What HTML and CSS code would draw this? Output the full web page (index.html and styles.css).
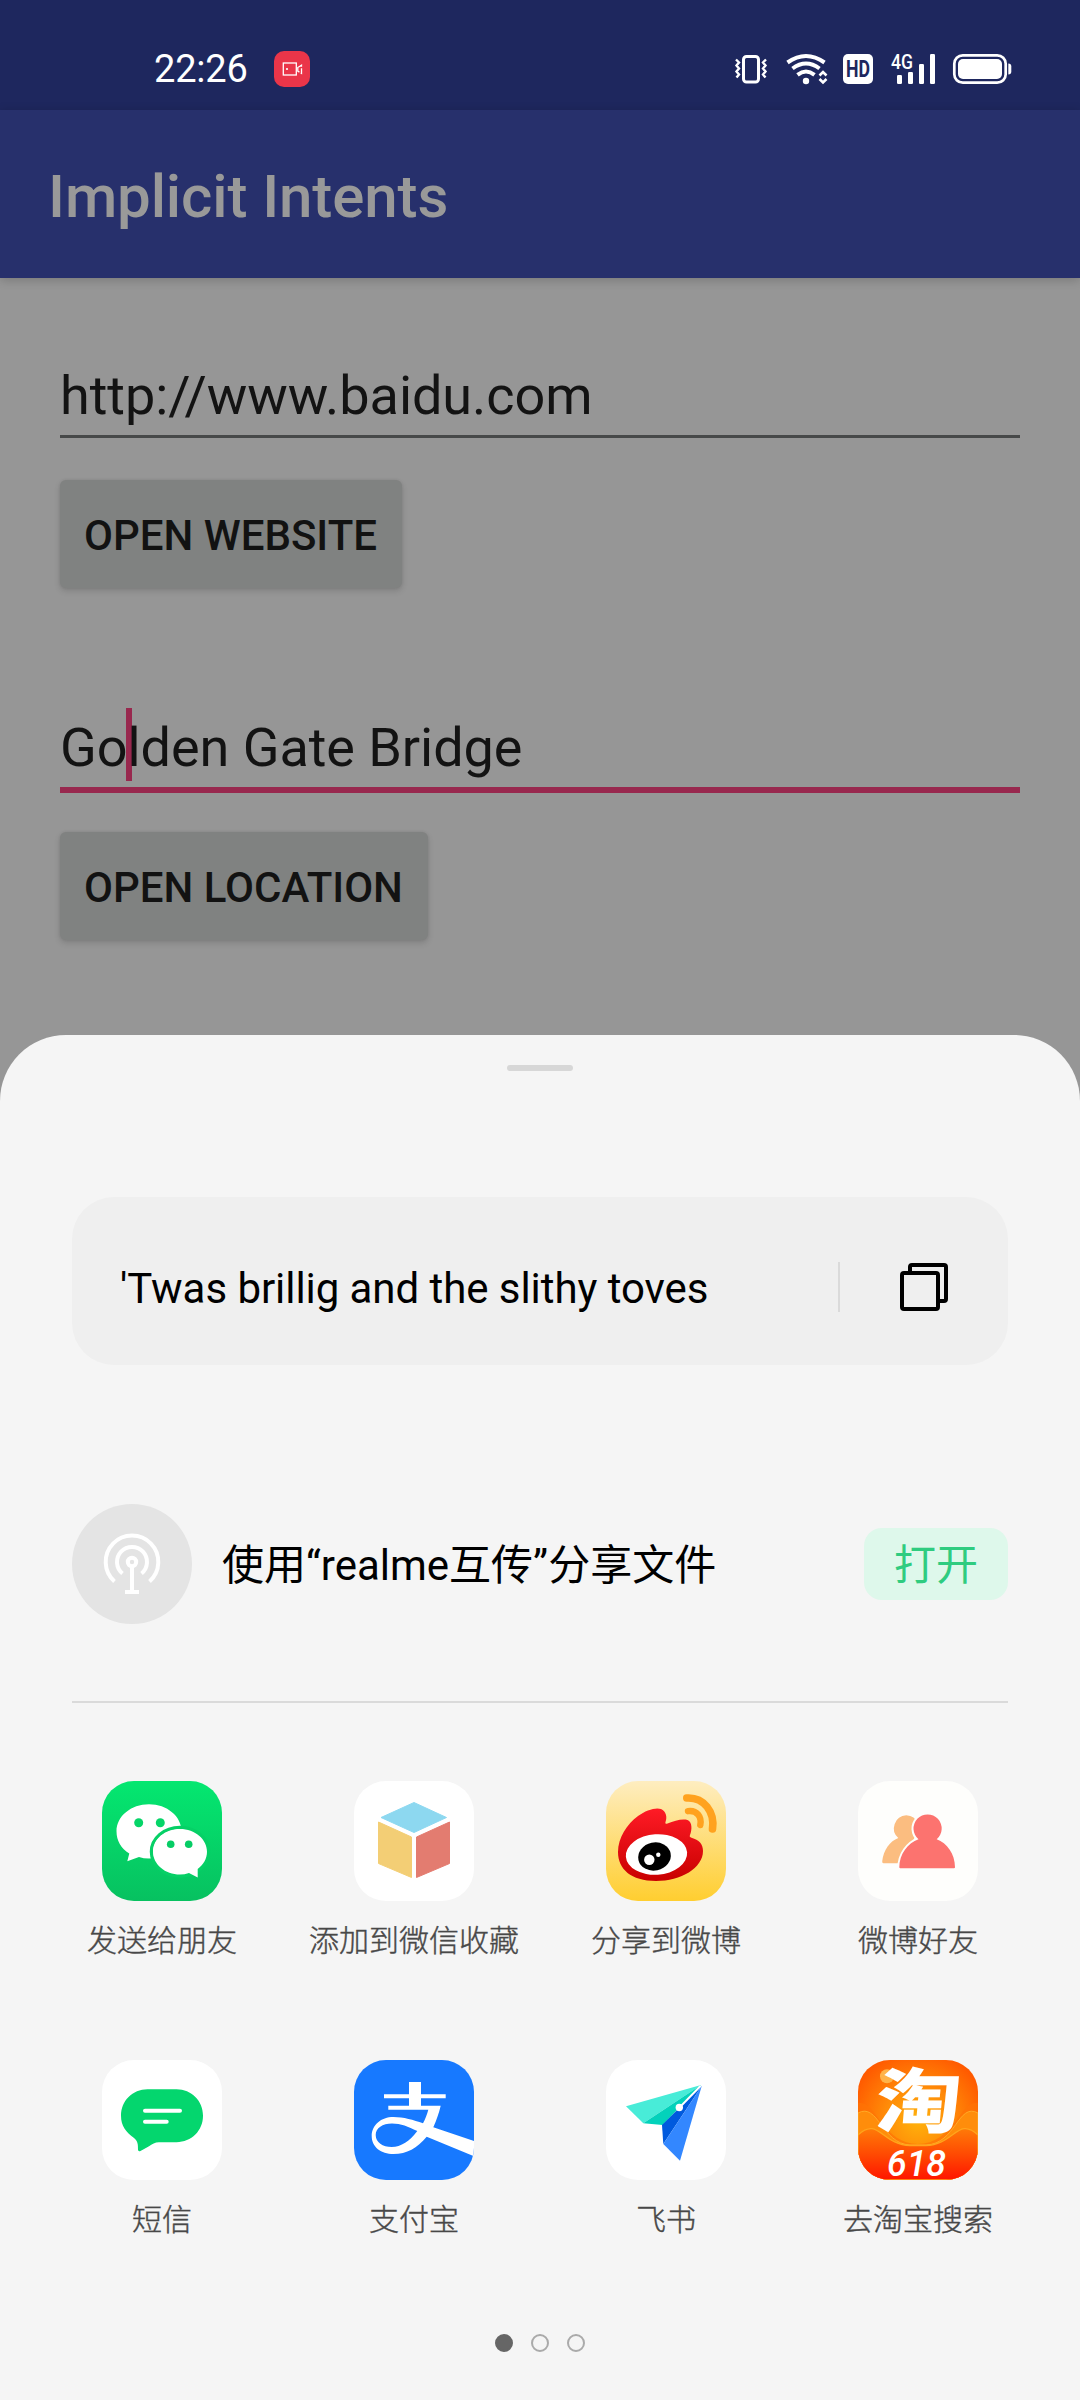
FILE: index.html
```html
<!DOCTYPE html>
<html lang="zh-CN">
<head>
<meta charset="utf-8">
<title>Implicit Intents</title>
<link rel="stylesheet" href="styles.css">
</head>
<body>
<header class="status">
  <span class="clock">22:26</span>
  <svg class="rec" width="36" height="36" viewBox="0 0 36 36">
    <rect width="36" height="36" rx="10" fill="#ea3549"/>
    <g fill="none" stroke="#fff" stroke-width="1.3"><rect x="9.3" y="12" width="13" height="12"/><path d="M23.8 16.5l3.7-2.3v8.200l-3.700-2.300z" stroke-dasharray="6 1.500"/></g>
    <circle cx="13" cy="18" r="1.100" fill="#fff"/>
  </svg>
  <svg class="sysicons" width="276" height="30" viewBox="0 0 276 30" fill="none" stroke="#fff">
    <rect x="8.500" y="2.500" width="15" height="25.500" rx="3" stroke-width="3"/>
    <path d="M1 5.500l3 3-2.500 3 2.500 3-2.500 3 2.500 3-2.500 3M31 5.500l-3 3 2.500 3-2.500 3 2.500 3-2.500 3 2.500 3" stroke-width="2.400"/>
    <path d="M52.500 8.500q18.500-13 37 0M57.500 14.500q13.500-10 27 0M62.500 20.800q8.500-6.500 17 0" stroke-width="4"/>
    <circle cx="71" cy="27" r="3.200" fill="#fff" stroke="none"/>
    <path d="M84.500 21.500l3.500-3.500 3.500 3.500M84.500 25l3.500 3.500 3.500-3.500" stroke-width="2.600"/>
    <rect x="108" y="0" width="30" height="30" rx="5" fill="#fff" stroke="none"/>
    <text class="hd" x="111" y="22.800" textLength="24" lengthAdjust="spacingAndGlyphs">HD</text>
    <text class="g4" x="156" y="15" textLength="22" lengthAdjust="spacingAndGlyphs">4G</text>
    <g fill="#fff" stroke="none"><rect x="162" y="21" width="5" height="9" rx="1.200"/><rect x="173" y="18" width="5" height="12" rx="1.200"/><rect x="184" y="10" width="5" height="20" rx="1.200"/><rect x="195" y="0" width="5" height="30" rx="1.200"/>
    <rect x="223" y="5" width="44" height="20" rx="5"/><path d="M273.300 9.500q3 0 3 3v5q0 3-3 3z"/></g>
    <rect x="219.300" y="1.300" width="51.400" height="27.400" rx="8.500" stroke-width="2.700"/>
  </svg>
</header>
<div class="appbar"><h1>Implicit Intents</h1></div>

<main class="form">
  <div class="field">http://www.baidu.com</div>
  <button class="btn">OPEN WEBSITE</button>
  <div class="field focused">Go<i class="caret"></i>lden Gate Bridge</div>
  <button class="btn">OPEN LOCATION</button>
</main>

<section class="sheet">
  <div class="handle"></div>
  <div class="preview">
    <p><span>'Twas brillig and the slithy toves</span></p>
    <svg class="copy" width="48" height="48" viewBox="0 0 48 48" fill="none" stroke="#000" stroke-width="4"><rect x="2" y="10" width="36" height="36" rx="2"/><path d="M10 10V4q0-2 2-2h32q2 0 2 2v32q0 2-2 2h-6"/></svg>
  </div>
  <div class="nearby">
    <svg width="120" height="120" viewBox="0 0 120 120" fill="none" stroke="#fff" stroke-width="4">
      <circle cx="60" cy="60" r="60" fill="#e4e4e4" stroke="none"/>
      <circle cx="60" cy="58" r="4.200"/>
      <path d="M60 62v26M53 88h14M50.500 69.500a15 15 0 1 1 19 0M42.500 77.500a26.300 26.300 0 1 1 35 0"/>
    </svg>
    <p>使用“realme互传”分享文件</p>
    <button class="open">打开</button>
  </div>
  <div class="apps">
    <div class="app">
      <svg viewBox="0 0 120 120"><defs><linearGradient id="wx" x2="0" y2="1"><stop stop-color="#04e770"/><stop offset="1" stop-color="#07c160"/></linearGradient></defs>
        <rect width="120" height="120" fill="url(#wx)"/>
        <path fill="#fff" d="M47 23.300c18 0 32.500 12 32.500 27S65 77.500 47 77.500q-5.500 0-10-1.500L25.300 80.200l2-7.700C19 67.500 14.500 59.500 14.500 50.300c0-15 14.500-27 32.500-27z"/>
        <circle cx="36.700" cy="41.700" r="4.500" fill="#05d568"/><circle cx="58.300" cy="41.700" r="4.500" fill="#05d568"/>
        <ellipse cx="78" cy="70.700" rx="28.500" ry="24.300" fill="none" stroke="#06d066" stroke-width="3.500"/>
        <path fill="#fff" d="M78 48c15 0 27 10.200 27 22.700 0 7-3.700 13-9.300 17.300V96.500L87 92q-4.500 1.500-9 1.500c-15 0-27-10.200-27-22.800S63 48 78 48z"/>
        <circle cx="68.700" cy="63.300" r="3.800" fill="#06cd65"/><circle cx="86.700" cy="63.300" r="3.800" fill="#06cd65"/></svg>
      <span>发送给朋友</span>
    </div>
    <div class="app">
      <svg viewBox="0 0 120 120"><rect width="120" height="120" fill="#fff"/>
        <g stroke-width="1" stroke-linejoin="round"><path d="M60 21.500l32.500 15L60 51.500l-33-15z" fill="#8dd8f0" stroke="#8dd8f0"/><path d="M24.500 41L57.500 56v40.500l-33-14z" fill="#f3ce75" stroke="#f3ce75"/><path d="M62.500 56l33-15v41.500l-33 14z" fill="#e37c70" stroke="#e37c70"/></g></svg>
      <span>添加到微信收藏</span>
    </div>
    <div class="app">
      <svg viewBox="0 0 120 120"><defs><linearGradient id="wb" x2="0" y2="1"><stop stop-color="#feedc0"/><stop offset="1" stop-color="#ffce30"/></linearGradient><linearGradient id="wr" x2="0" y2="1"><stop stop-color="#ff1b26"/><stop offset="1" stop-color="#c80000"/></linearGradient></defs>
        <rect width="120" height="120" fill="url(#wb)"/>
        <path fill="url(#wr)" d="M12 71C12 57 21 43 32 35c8-6 18-9 23-7s6.500 8 4.500 13q-1 2.500 2 1.500c7-3 15-5 20-3.500 5 2 4.500 10 2.500 15q-1 2 1.500 2.800C93 59 97 63 97 70c0 17-22 30-47 30S12 88 12 71z"/>
        <ellipse cx="50.500" cy="73.500" rx="30.700" ry="20.300" fill="#fff" transform="rotate(-4 50.500 73.500)"/>
        <ellipse cx="48.500" cy="75.500" rx="16.400" ry="14" transform="rotate(-12 48.500 75.500)"/>
        <circle cx="43.300" cy="78.700" r="5.200" fill="#fff"/><circle cx="52.300" cy="73.700" r="2.200" fill="#fff"/>
        <g fill="none" stroke="#ffa21f" stroke-linecap="round"><path d="M80.800 17C98 16 109 31 106.500 48" stroke-width="7.600"/><path d="M82 30.200C91 29 96 36 94.300 44" stroke-width="6.400"/></g></svg>
      <span>分享到微博</span>
    </div>
    <div class="app">
      <svg viewBox="0 0 120 120"><rect width="120" height="120" fill="#fefefc"/>
        <path fill="#fbbd80" d="M48.300 34.300a12.800 13 0 0 1 8 22.700L50 75l-9 7.300H25.500q-1.500 0-1.300-2C25.500 69 32 60 40.300 57a13 13 0 0 1 8-22.700z"/>
        <path d="M60.500 58.300a14.100 14.100 0 1 1 18.200 0C89 62 97 73 97 87.300H41.300C41.300 73 50 62 60.500 58.300z" fill="none" stroke="#fefefc" stroke-width="4"/>
        <path fill="#fc736f" d="M60.500 58.300a14.100 14.100 0 1 1 18.200 0C89 62 97 73 97 86.300q0 1-1 1H42.300q-1 0-1-1C41.300 73 50 62 60.500 58.300z"/></svg>
      <span>微博好友</span>
    </div>
    <div class="app">
      <svg viewBox="0 0 120 120"><rect width="120" height="120" fill="#fff"/>
        <path fill="#04d66e" d="M45.500 29.300h29c15 0 26.500 11.700 26.500 26.500S89.500 82.200 74.500 82.200H57c-4 0-7 2-10 4l-8.500 4.800q-2.500 1-2.500-1.500c0-5 0-8-4-11.500-8-6-13-12-13-22.200 0-14.800 11.500-26.500 26.500-26.500z"/>
        <path d="M43 50.700h35M43 61.800h21.700" stroke="#fff" stroke-width="4" stroke-linecap="round"/></svg>
      <span>短信</span>
    </div>
    <div class="app">
      <svg viewBox="0 0 120 120"><rect width="120" height="120" fill="#1779ff"/>
        <path fill="#fff" fill-rule="evenodd" d="M55 22h12v12.300h24.700v4H67v7.400h19.700C85 53 82.500 60 79.300 67.300L120 81v15.300L72.700 76.700C63 88 53 94 39.500 94 27 94 17.700 87 17.700 76S27 57 39.500 57c10 0 20 3 29.500 6.300 2.500-4.500 4-9 5.300-13.600h-40v-4H55v-7.400H30v-4h25zM63.300 71C54 66.500 47 63.500 38 63.500c-9.500 0-16.300 4.500-16.300 11.500 0 7.500 7 12 16 12C47 87 56 81 63.300 71z"/></svg>
      <span>支付宝</span>
    </div>
    <div class="app">
      <svg viewBox="0 0 120 120"><rect width="120" height="120" fill="#fff"/>
        <path fill="#48ecd8" d="M20 46.300L95 25 37.300 63.300z"/><path fill="#03d2bb" d="M37.300 63.300L95 25 56.700 65z"/><path fill="#005ade" d="M56 65L95.700 26 57.300 84z"/><path fill="#3387ff" d="M57.300 84L95.700 26 74 100.700z"/>
        <path d="M73.500 47.500L94.500 26" stroke="#fff" stroke-width="1.800"/><circle cx="73.300" cy="47.500" r="3.700" fill="#fff"/></svg>
      <span>飞书</span>
    </div>
    <div class="app">
      <svg class="taobao" viewBox="0 0 120 120"><defs><radialGradient id="tg" cx=".5" cy=".5" r=".58"><stop stop-color="#ffb30c"/><stop offset=".5" stop-color="#ff8a08"/><stop offset="1" stop-color="#ff5a00"/></radialGradient><linearGradient id="tr" x2="0" y2="1"><stop stop-color="#ff7a08"/><stop offset=".5" stop-color="#ff4a02"/><stop offset="1" stop-color="#ff1500"/></linearGradient><clipPath id="tc"><rect width="120" height="120" rx="32"/></clipPath></defs>
        <g clip-path="url(#tc)">
        <rect width="120" height="120" fill="url(#tg)"/>
        <path d="M0 43C18 40 24 84 60 84S102 40 120 43V120H0z" fill="#ff7406" opacity=".7"/>
        <path d="M0 53C20 42 24 84 52 85H68C98 84 100 42 120 53V120H0z" fill="#ff8d0b" stroke="#ffab27"/>
        <path d="M0 75C20 56 24 85 52 85.500H68C96 85 100 56 120 75V120H0z" fill="url(#tr)" stroke="#ffa51c" stroke-width="1.300"/>
        <circle cx="29" cy="16.300" r="7" fill="#ffb348"/>
        </g>
        <g transform="translate(16 67) skewX(-5) scale(1.180 .98)"><text class="tao" x="0" y="0">淘</text></g>
        <text class="sale" x="29" y="115.500" textLength="59" lengthAdjust="spacingAndGlyphs">618</text></svg>
      <span>去淘宝搜索</span>
    </div>
  </div>
  <div class="pager"><i class="on"></i><i></i><i></i></div>
</section>
</body>
</html>
```
FILE: styles.css
```css
* { box-sizing: border-box; }
body {
  margin: 0;
  width: 1080px;
  height: 2400px;
  display: flex;
  flex-direction: column;
  background: #969696;
  font-family: Roboto, "Noto Sans CJK SC", sans-serif;
  overflow: hidden;
}
h1, p { margin: 0; font-weight: 400; }
button { border: 0; font-family: inherit; }
svg { display: block; flex: none; }

.status {
  height: 110px;
  flex: none;
  display: flex;
  align-items: flex-start;
  padding: 51px 69px 0 154px;
  background: #1e275e;
  color: #fff;
}
.clock { width: 120px; font-size: 38px; line-height: 36px; letter-spacing: -.2px; }
.sysicons { margin: 3px 0 0 auto; overflow: visible; }
.hd { font: 700 23px Roboto, sans-serif; fill: #1e275e; stroke: none; }
.g4 { font: 500 20px Roboto, sans-serif; fill: #fff; stroke: none; }

.appbar {
  height: 168px;
  flex: none;
  display: flex;
  align-items: center;
  padding: 5px 0 0 48px;
  background: #27306c;
  box-shadow: 0 2px 10px rgba(0, 0, 0, .2);
}
.appbar h1 { font-size: 60px; font-weight: 500; line-height: 70px; letter-spacing: -.1px; color: #999; }

.form {
  height: 757px;
  flex: none;
  display: flex;
  flex-direction: column;
  align-items: flex-start;
  padding: 82px 60px 0;
}
.field {
  width: 960px;
  height: 78px;
  border-bottom: 3px solid #474949;
  font-size: 54px;
  line-height: 72px;
  letter-spacing: -.05px;
  color: #131313;
}
.field.focused { height: 87px; margin-top: 118px; border-bottom: 6px solid #98284e; line-height: 83px; }
.caret { display: inline-block; width: 6px; height: 73px; margin: 0 -5px 0 -1px; vertical-align: -15px; background: #98284e; }
.btn {
  height: 108px;
  margin-top: 42px;
  padding: 2px 25px 0 24px;
  border-radius: 6px;
  background: #808281;
  box-shadow: 0 3px 6px rgba(0, 0, 0, .14), 0 0 3px rgba(0, 0, 0, .08);
  font-size: 42px;
  font-weight: 500;
  color: #121212;
}
.focused + .btn { margin-top: 39px; }

.sheet {
  flex: 1;
  display: flex;
  flex-direction: column;
  padding: 30px 72px 0;
  border-radius: 66px 66px 0 0;
  background: #f5f5f5;
}
.handle { width: 66px; height: 6px; border-radius: 3px; align-self: center; background: #d7d7d7; }
.preview {
  height: 168px;
  margin-top: 126px;
  display: flex;
  align-items: center;
  padding: 12px 60px 0 48px;
  border-radius: 42px;
  background: #efefef;
}
.preview p { flex: 1; height: 50px; font-size: 42px; line-height: 54px; letter-spacing: -.06px; color: #000; border-right: 2px solid #dadada; margin-right: 60px; }
.copy { margin-top: -1px; }
.nearby {
  height: 200px;
  margin-top: 138px;
  flex: none;
  display: flex;
  padding-top: 1px;
  border-bottom: 2px solid #dadada;
}
.nearby p { flex: 1; padding-left: 30px; font-size: 42px; line-height: 124px; color: #000; }
.open {
  width: 144px;
  height: 72px;
  margin-top: 24px;
  padding: 3px 0 0;
  border-radius: 18px;
  background: #def8eb;
  font-size: 42px;
  line-height: 69px;
  color: #2fcc80;
}
.apps {
  display: grid;
  grid-template-columns: repeat(4, 252px);
  grid-auto-rows: 279px;
  margin: 78px -36px 0;
}
.app { display: flex; flex-direction: column; align-items: center; }
.app svg { width: 120px; height: 120px; border-radius: 32px; }
.app .taobao { overflow: visible; border-radius: 0; }
.app span { margin-top: 18px; font-size: 30px; font-weight: 300; line-height: 44px; color: #484848; -webkit-text-stroke: .4px #484848; white-space: nowrap; }
.tao { font: 900 72px "Noto Sans CJK SC", sans-serif; fill: #fff; }
.sale { font: italic 500 37px Roboto, sans-serif; fill: #fff; }
.pager { display: flex; justify-content: center; gap: 18px; margin-top: -5px; }
.pager i { width: 18px; height: 18px; border: 2px solid #aaa; border-radius: 50%; }
.pager .on { background: #666; border-color: #666; }
```
